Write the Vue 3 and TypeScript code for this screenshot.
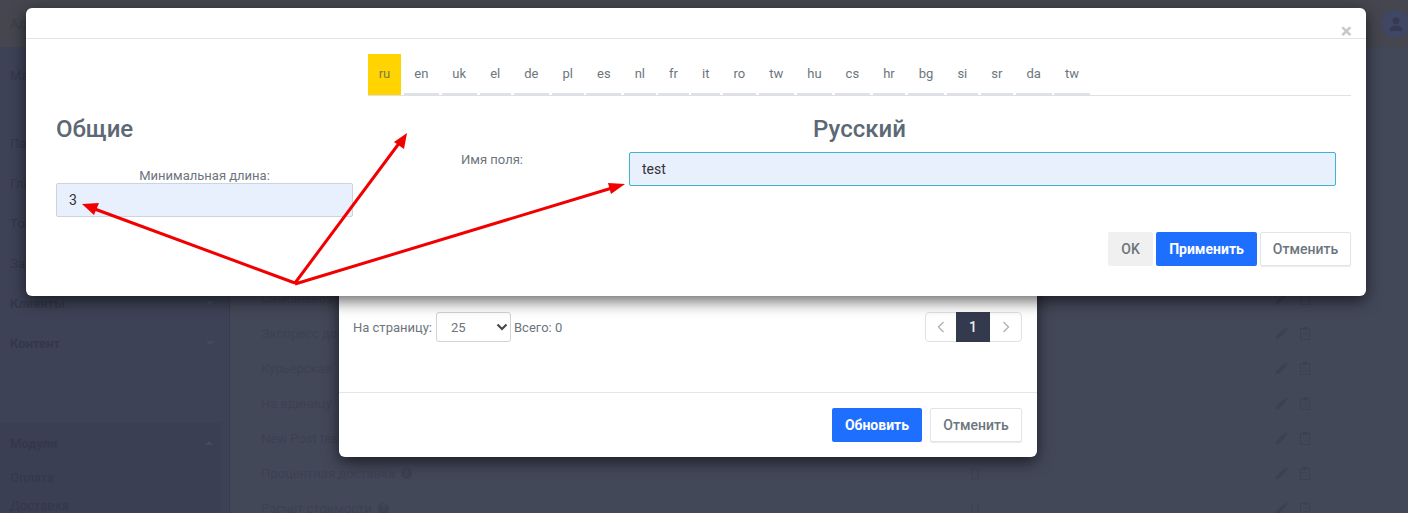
<script setup lang="ts">
const langs: string[] = ['ru','en','uk','el','de','pl','es','nl','fr','it','ro','tw','hu','cs','hr','bg','si','sr','da','tw']
const rows: { name: string; hint: boolean; extra: boolean }[] = [
  { name: 'Самовывоз', hint: false, extra: false },
  { name: 'Экспресс до', hint: false, extra: false },
  { name: 'Курьерская', hint: false, extra: false },
  { name: 'На единицу', hint: false, extra: false },
  { name: 'New Post tes', hint: false, extra: false },
  { name: 'Процентная доставка', hint: true, extra: true },
  { name: 'Расчет стоимости', hint: true, extra: true }
]
</script>

<template>
  <div class="page">
    <header class="topbar">
      <span class="top-title">Админ</span>
      <span class="avatar">
        <svg width="16" height="16" viewBox="0 0 16 16"><circle cx="8" cy="4.8" r="3.4" fill="#353a50"/><path d="M1.5 15c0-4 3-5.6 6.5-5.6s6.5 1.600 6.500 5.600z" fill="#353a50"/></svg>
      </span>
    </header>
    <div class="shell">
      <aside class="sidebar">
        <div class="side-item first">Магазин</div>
        <div class="side-item after-gap">Панель</div>
        <div class="side-item">Главная</div>
        <div class="side-item">Товары</div>
        <div class="side-item">Заказы</div>
        <div class="side-item strong">Клиенты<i class="caret down"></i></div>
        <div class="side-item strong">Контент<i class="caret down"></i></div>
        <div class="submenu">
          <div class="side-item strong">Модули<i class="caret up"></i></div>
          <div class="sub-item">Оплата</div>
          <div class="sub-item">Доставка</div>
        </div>
      </aside>
      <main class="content">
        <div v-for="row in rows" :key="row.name" class="row">
          <span class="row-name">{{ row.name }}</span>
          <span v-if="row.hint" class="hint">?</span>
          <span class="row-fill"></span>
          <svg v-if="row.extra" class="row-extra" width="8" height="13" viewBox="0 0 8 13"><rect x="1" y="2" width="6" height="10" fill="none" stroke="#3d4252"/></svg>
          <svg width="13" height="13" viewBox="0 0 13 13"><path d="M0.500 12.500l0.800-3.300 7.400-7.400 2.500 2.500-7.400 7.400z" fill="#3c4152"/><path d="M9.500 1l1-1 2.500 2.500-1 1z" fill="#3c4152"/></svg>
          <svg class="clip" width="10" height="13" viewBox="0 0 10 13"><rect x="0.500" y="1.500" width="9" height="11" fill="none" stroke="#3c4152"/><rect x="3" y="0" width="4" height="3" fill="#3c4152"/><path d="M2 6h6M2 9h6" stroke="#3f4455"/></svg>
        </div>
      </main>
    </div>

    <section class="modal lower">
      <div class="pager-row">
        <span class="muted">На страницу:</span>
        <span class="select-wrap">
          <select class="per-page"><option>25</option></select>
          <svg class="select-arrow" width="12" height="8" viewBox="0 0 12 8"><path d="M1.500 1.500L6 6l4.500-4.500" fill="none" stroke="#444" stroke-width="2"/></svg>
        </span>
        <span class="muted">Всего: 0</span>
        <nav class="pagination">
          <span class="page-btn prev"><svg width="8" height="12" viewBox="0 0 8 12"><path d="M6.500 1L1.500 6l5 5" fill="none" stroke="#b0b4b8" stroke-width="1.400"/></svg></span>
          <span class="page-btn current">1</span>
          <span class="page-btn next"><svg width="8" height="12" viewBox="0 0 8 12"><path d="M1.500 1l5 5-5 5" fill="none" stroke="#b0b4b8" stroke-width="1.400"/></svg></span>
        </nav>
      </div>
      <footer class="lower-footer">
        <button class="btn primary">Обновить</button>
        <button class="btn plain">Отменить</button>
      </footer>
    </section>

    <section class="modal upper">
      <div class="upper-head"><span class="close">×</span></div>
      <div class="upper-body">
        <div class="tabs">
          <span v-for="(lang, i) in langs" :key="i" class="tab" :class="{ active: i === 0 }">{{ lang }}</span>
        </div>
        <div class="columns">
          <div class="col-left">
            <h2 class="heading">Общие</h2>
            <label class="field-label">Минимальная длина:</label>
            <input class="field" value="3" />
          </div>
          <div class="col-right">
            <h2 class="heading center">Русский</h2>
            <div class="name-row">
              <label class="name-label">Имя поля:</label>
              <input class="field focused" value="test" />
            </div>
          </div>
        </div>
        <footer class="upper-footer">
          <button class="btn ok">OK</button>
          <button class="btn primary apply">Применить</button>
          <button class="btn plain narrow">Отменить</button>
        </footer>
      </div>
    </section>

    <svg class="arrows" width="1408" height="513" viewBox="0 0 1408 513">
      <g stroke="#f20000" stroke-width="3" fill="none">
        <path d="M295 283L92 208M295 283L400 142M295 284L612 188"/>
      </g>
      <g fill="#f20000">
        <path d="M82 204L99 203L94 215z"/>
        <path d="M407 133L404 149L394 142z"/>
        <path d="M625 184L611 194L608 183z"/>
      </g>
    </svg>
  </div>
</template>

<style>
html, body { margin: 0; background: #434859; }
</style>

<style scoped>
.page {
  position: relative;
  width: 1408px;
  height: 513px;
  overflow: hidden;
  background: #434859;
  font-family: Roboto, "Liberation Sans", sans-serif;
  font-size: 13px;
  color: #6c757d;
}
.topbar {
  height: 47px;
  background: #45464f;
  display: flex;
  align-items: center;
  justify-content: space-between;
  padding: 0 0 0 10px;
  box-sizing: border-box;
}
.top-title { color: #3d3e46; font-size: 13px; }
.avatar {
  width: 28px;
  height: 28px;
  margin-right: -2px;
  border-radius: 50%;
  background: #3f4764;
  display: flex;
  align-items: center;
  justify-content: center;
}
.shell { display: flex; height: 466px; }
.sidebar {
  width: 229px;
  flex: none;
  background: #3d4256;
  border-right: 1px solid #383c4e;
  color: #34384a;
  box-sizing: content-box;
  overflow: hidden;
}
.side-item {
  height: 40px;
  padding: 0 10px;
  display: flex;
  align-items: center;
  justify-content: space-between;
  font-size: 13px;
}
.side-item.first { margin-top: 8px; }
.side-item.after-gap { margin-top: 28px; }
.side-item.strong { font-weight: 700; }
.caret { width: 0; height: 0; border-left: 4px solid transparent; border-right: 4px solid transparent; margin-right: 5px; }
.caret.down { border-top: 4px solid #454a5e; }
.caret.up { border-bottom: 4px solid #454a5e; }
.submenu { margin-top: 60px; width: 222px; background: #3a3f53; height: 120px; }
.sub-item { height: 28px; padding: 0 10px; display: flex; align-items: center; }
.submenu .side-item { padding-right: 4px; }
.content { flex: 1; padding: 234px 98px 0 31px; overflow: hidden; }
.row { height: 35px; display: flex; align-items: center; color: #3c4152; font-size: 13px; }
.row-name { white-space: nowrap; }
.row-fill { flex: 1; }
.hint {
  width: 11px;
  height: 11px;
  margin-left: 6px;
  border-radius: 50%;
  background: #3c4152;
  color: #434859;
  font-size: 9px;
  font-weight: 700;
  text-align: center;
  line-height: 11px;
}
.row-extra { margin-right: 296px; }
.clip { margin-left: 12px; }

.modal { position: absolute; background: #fff; border-radius: 6px; box-shadow: 0 5px 16px rgba(0, 0, 0, 0.6); box-sizing: border-box; }
.lower {
  left: 339px;
  top: 120px;
  width: 698px;
  height: 337px;
  display: flex;
  flex-direction: column;
  justify-content: flex-end;
}
.pager-row { display: flex; align-items: center; padding: 0 15px 0 14px; height: 30px; margin-bottom: 50px; }
.muted { color: #6c757d; }
.select-wrap { position: relative; margin: 0 3px 0 4px; display: block; height: 30px; }
.per-page {
  appearance: none;
  width: 75px;
  height: 30px;
  padding: 0 0 0 14px;
  border: 1px solid #ced4da;
  border-radius: 3px;
  background: #fff;
  color: #6c757d;
  font: 13px Roboto, sans-serif;
  display: block;
}
.select-arrow { position: absolute; right: 3px; top: 11px; }
.pagination {
  margin-left: auto;
  display: flex;
  height: 30px;
  width: 97px;
  box-sizing: border-box;
  border: 1px solid #dee2e6;
  border-radius: 4px;
}
.page-btn { display: flex; align-items: center; justify-content: center; }
.prev { width: 30px; flex: none; }
.next { flex: 1; }
.current { width: 34px; margin: -1px 0; background: #333a4d; color: #e9eef2; font-weight: 500; font-size: 14px; }
.lower-footer {
  height: 65px;
  box-sizing: border-box;
  border-top: 1px solid #e5e5e5;
  padding: 15px 15px 15px 0;
  display: flex;
  justify-content: flex-end;
  gap: 8px;
}
.btn {
  height: 34px;
  border-radius: 2px;
  border: 1px solid transparent;
  font: 500 14px Roboto, sans-serif;
  padding: 0;
  display: block;
}
.primary { width: 90px; background: #1f6fff; color: #fff; font-weight: 700; }
.plain { width: 92px; background: #fff; border-color: #e2e4e6; color: #6c757d; box-shadow: 0 1px 1px rgba(0,0,0,.08); }
.upper { left: 26px; top: 8px; width: 1340px; height: 288px; }
.upper-head { height: 31px; box-sizing: border-box; border-bottom: 1px solid #e5e5e5; position: relative; }
.close { position: absolute; right: 14px; top: 11px; font-size: 21px; line-height: 24px; font-weight: 700; color: #c8c8c8; }
.upper-body { padding: 15px 15px 0 30px; }
.tabs { margin-left: 312px; display: flex; height: 42px; border-bottom: 1px solid #dee2e6; box-sizing: border-box; }
.tab {
  height: 41px;
  box-sizing: border-box;
  padding: 0 10.650px;
  margin-right: 2.750px;
  display: flex;
  align-items: center;
  border-bottom: 2px solid #dee2e6;
  color: #6c757d;
  font-size: 13px;
}
.tab.active { background: #ffd400; border-bottom-color: #ffd400; color: #7b7a50; height: 41px; }
.columns { display: flex; }
.col-left { width: 297px; flex: none; padding-top: 20px; }
.col-right { margin-left: 30px; flex: 1; padding: 20px 15px 0 0; }
.heading { margin: 0; height: 26px; line-height: 26px; font-size: 24px; font-weight: 500; color: #5c6873; }
.heading.center { text-align: center; }
.field-label { display: block; margin-top: 26px; text-align: center; height: 15px; line-height: 15px; color: #6c757d; font-size: 13px; }
.field {
  width: 100%;
  height: 34px;
  box-sizing: border-box;
  margin: 0;
  padding: 0 12px;
  background: #e8f0fe;
  border: 1px solid #ced4da;
  border-radius: 2px;
  color: #333;
  font: 14px Roboto, sans-serif;
  display: block;
  outline: none;
}
.field.focused { border-color: #3db6cc; }
.name-row { display: flex; margin-top: 10px; }
.name-label { width: 218px; flex: none; margin-right: 28px; text-align: center; height: 15px; line-height: 15px; color: #6c757d; }
.upper-footer { display: flex; justify-content: flex-end; gap: 3px; margin-top: 15px; }
.ok { width: 45px; background: #f0f0f0; color: #6c757d; }
.apply { width: 101px; }
.narrow { width: 91px; }
.arrows { position: absolute; left: 0; top: 0; pointer-events: none; }
</style>
